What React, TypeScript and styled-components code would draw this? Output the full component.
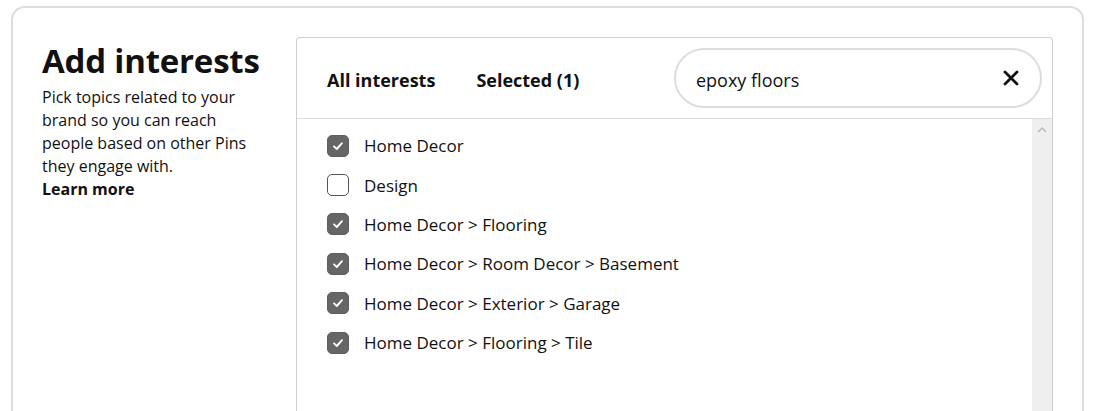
import React from 'react';
import styled, { createGlobalStyle } from 'styled-components';

const GlobalStyle = createGlobalStyle`
  html, body {
    margin: 0;
    padding: 0;
    background: #fff;
    overflow: hidden;
  }
  body {
    font-family: "Open Sans", "Noto Sans", sans-serif;
    color: #111;
  }
`;

const interests = [
    { label: 'Home Decor', checked: true },
    { label: 'Design', checked: false },
    { label: 'Home Decor > Flooring', checked: true },
    { label: 'Home Decor > Room Decor > Basement', checked: true },
    { label: 'Home Decor > Exterior > Garage', checked: true },
    { label: 'Home Decor > Flooring > Tile', checked: true },
];

export default function App() {
    return (
        <>
        <GlobalStyle />
        <Card>
            <Intro>
                <Title>Add interests</Title>
                <Blurb>
                    Pick topics related to your brand so you can reach people based on other Pins they engage with.
                </Blurb>
                <LearnMore href="#">Learn more</LearnMore>
            </Intro>
            <Panel>
                <PanelHeader>
                    <Tabs>
                        <Tab>All interests</Tab>
                        <Tab>Selected (1)</Tab>
                    </Tabs>
                    <Search>
                        <SearchInput defaultValue="epoxy floors" />
                        <ClearButton aria-label="Clear search">
                            <svg width="16" height="16" viewBox="0 0 16 16">
                                <path d="M2 2 L14 14 M14 2 L2 14" stroke="#111" strokeWidth="2.8" strokeLinecap="round" />
                            </svg>
                        </ClearButton>
                    </Search>
                </PanelHeader>
                <ListArea>
                    <List>
                        {interests.map((item) => (
                            <Row key={item.label}>
                                <Box checked={item.checked}>
                                    {item.checked && (
                                        <svg width="14" height="14" viewBox="0 0 14 14">
                                            <path d="M3 7.4 L5.8 10 L11 4.2" fill="none" stroke="#fff" strokeWidth="1.9" strokeLinecap="round" strokeLinejoin="round" />
                                        </svg>
                                    )}
                                </Box>
                                <Label>{item.label}</Label>
                            </Row>
                        ))}
                    </List>
                    <Scrollbar>
                        <svg width="10" height="6" viewBox="0 0 10 6">
                            <path d="M1 5 L5 1 L9 5" fill="none" stroke="#bbb" strokeWidth="1.5" />
                        </svg>
                    </Scrollbar>
                </ListArea>
            </Panel>
        </Card>
        </>
    );
}

const Card = styled.div`
    margin: 6px 12px 0 11px;
    height: calc(100vh - 6px);
    border: 2px solid #ddd;
    border-bottom: none;
    border-radius: 14px 14px 0 0;
    display: grid;
    grid-template-columns: 254px 1fr;
    padding: 29px 29px 0 29px;
    box-sizing: border-box;
`

const Intro = styled.div`
    padding-top: 4px;
`

const Title = styled.h1`
    margin: 0 0 5px;
    font-size: 33px;
    line-height: 40px;
    font-weight: 700;
    letter-spacing: -0.2px;
    color: #111;
`

const Blurb = styled.p`
    margin: 0;
    max-width: 222px;
    font-size: 16px;
    line-height: 23px;
    color: #111;
`

const LearnMore = styled.a`
    display: block;
    font-size: 16px;
    line-height: 23px;
    font-weight: 700;
    color: #111;
    text-decoration: none;
`

const Panel = styled.div`
    border: 1px solid #cfcfcf;
    border-bottom: none;
    border-radius: 4px 4px 0 0;
    display: flex;
    flex-direction: column;
    min-height: 0;
`

const PanelHeader = styled.div`
    height: 80px;
    flex-shrink: 0;
    display: flex;
    align-items: center;
    justify-content: space-between;
    padding: 0 10px 0 30px;
    border-bottom: 1px solid #ddd;
`

const Tabs = styled.div`
    display: flex;
    gap: 41px;
    padding-top: 4px;
`

const Tab = styled.button`
    border: none;
    background: none;
    padding: 0;
    font-family: inherit;
    font-size: 18px;
    font-weight: 700;
    color: #111;
`

const Search = styled.div`
    width: 368px;
    height: 60px;
    box-sizing: border-box;
    border: 2px solid #ddd;
    border-radius: 30px;
    display: flex;
    align-items: center;
    padding: 0 21px 0 20px;
`

const SearchInput = styled.input`
    flex: 1;
    border: none;
    outline: none;
    font-family: inherit;
    font-size: 18px;
    color: #111;
    background: transparent;
    padding: 3px 0 0;
`

const ClearButton = styled.button`
    border: none;
    background: none;
    padding: 0;
    display: flex;
`

const ListArea = styled.div`
    flex: 1;
    display: flex;
    min-height: 0;
`

const List = styled.div`
    flex: 1;
    padding: 7px 0 0 30px;
`

const Row = styled.div`
    display: flex;
    align-items: center;
    gap: 15px;
    height: 39.4px;
`

const Box = styled.span<{ checked: boolean }>`
    width: 22px;
    height: 22px;
    box-sizing: border-box;
    border-radius: 5px;
    border: 1.5px solid ${({ checked }) => (checked ? '#5f5f5f' : '#555')};
    background: ${({ checked }) => (checked ? '#666' : '#fff')};
    display: flex;
    align-items: center;
    justify-content: center;
`

const Label = styled.span`
    font-size: 17px;
    color: #111;
`

const Scrollbar = styled.div`
    width: 20px;
    background: #efefef;
    display: flex;
    justify-content: center;
    padding-top: 8px;
    box-sizing: border-box;
`
